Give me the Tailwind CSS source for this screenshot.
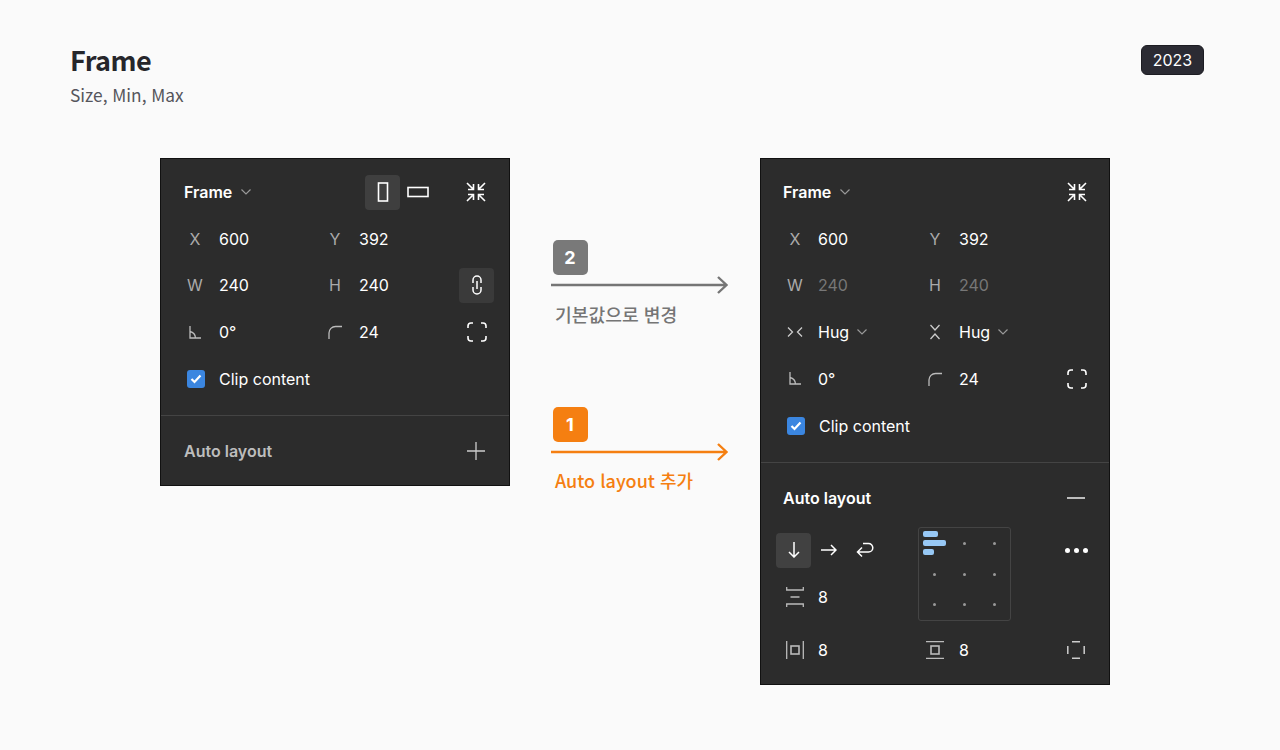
<!DOCTYPE html>
<html lang="ko">
<head>
  <meta charset="UTF-8">
  <meta name="viewport" content="width=device-width, initial-scale=1.0">
  <title>Frame - Size, Min, Max</title>
  <script src="https://cdn.jsdelivr.net/npm/@tailwindcss/browser@4"></script>
</head>
<body class="bg-[#fafafa] h-[750px] overflow-hidden font-['Inter','Noto_Sans_CJK_KR',sans-serif]">
  <!-- Header -->
  <header class="h-[158px] pl-[70px] pr-[76px] pt-[44px] flex justify-between items-start">
    <div class="font-['Noto_Sans_CJK_KR',sans-serif]">
      <h1 class="text-[27px] leading-[32px] font-bold tracking-[-0.5px] text-[#26262b]">Frame</h1>
      <p class="mt-[6px] text-[17.3px] leading-[26px] text-[#55555c]">Size, Min, Max</p>
    </div>
    <div class="mt-[1px] w-[63px] h-[30px] flex items-center justify-center rounded-md bg-[#2b2b33] border border-[#1c1c22] text-white text-[16px]">2023</div>
  </header>

  <main class="flex items-start pl-[160px]">
    <!-- Left panel -->
    <section class="w-[350px] h-[328px] bg-[#2c2c2c] border border-[#111] text-white text-[16px] shrink-0">
      <div class="pt-[10px] pb-[13px] border-b border-[#444]">
        <div class="h-[46.6px] flex items-center pl-[23px]">
          <span class="font-semibold w-[49px]">Frame</span>
          <svg class="w-[12px] h-[8px] ml-[7px] text-[#999]" viewBox="0 0 12 8" fill="none" stroke="currentColor" stroke-width="1.2"><path d="M1.5 1.5 6 6l4.500-4.500"/></svg>
          <div class="ml-[113px] w-[35px] h-[35px] rounded bg-[#3f3f3f] flex items-center justify-center">
            <svg class="w-[12px] h-[20px]" viewBox="0 0 12 20" fill="none" stroke="#fff" stroke-width="1.6"><rect x="1.500" y="1" width="9" height="18"/></svg>
          </div>
          <svg class="w-[22px] h-[12px] ml-[7px]" viewBox="0 0 22 12" fill="none" stroke="#fff" stroke-width="1.600"><rect x="1" y="1.500" width="20" height="9"/></svg>
          <svg class="w-[20px] h-[20px] ml-[37px]" viewBox="0 0 20 20" fill="none" stroke="#fff" stroke-width="1.600"><path d="M1 1l5.500 5.500M2 7.500h5.500V2M19 1l-5.500 5.500M18 7.500h-5.500V2M1 19l5.500-5.500M2 12.500h5.500V18M19 19l-5.500-5.500M18 12.500h-5.500V18"/></svg>
        </div>
        <div class="h-[46.6px] flex items-center pl-[22px]">
          <div class="w-[140px] flex items-center"><span class="w-[24px] text-center text-[#aaa]">X</span><span class="ml-[12px]">600</span></div>
          <div class="w-[140px] flex items-center"><span class="w-[24px] text-center text-[#aaa]">Y</span><span class="ml-[12px]">392</span></div>
        </div>
        <div class="h-[46.6px] flex items-center pl-[22px]">
          <div class="w-[140px] flex items-center"><span class="w-[24px] text-center text-[#aaa]">W</span><span class="ml-[12px]">240</span></div>
          <div class="w-[140px] flex items-center"><span class="w-[24px] text-center text-[#aaa]">H</span><span class="ml-[12px]">240</span></div>
          <div class="ml-[-4px] w-[35px] h-[35px] rounded bg-[#3a3a3a] flex items-center justify-center">
            <svg class="w-[10px] h-[20px]" viewBox="0 0 10 20" fill="none" stroke="#fff" stroke-width="1.500"><path d="M1 8V5a4 4 0 0 1 8 0v3M1 12v3a4 4 0 0 0 8 0v-3M5 6v8"/></svg>
          </div>
        </div>
        <div class="h-[46.6px] flex items-center pl-[22px]">
          <div class="w-[140px] flex items-center">
            <span class="w-[24px] flex justify-center"><svg class="w-[12px] h-[13px]" viewBox="0 0 12 13" fill="none" stroke="#bbb" stroke-width="1.300"><path d="M1 0v12h11M1 5.500a7 7 0 0 1 5.500 6.500"/></svg></span>
            <span class="ml-[12px]">0°</span>
          </div>
          <div class="w-[140px] flex items-center">
            <span class="w-[24px] flex justify-center"><svg class="w-[14px] h-[14px]" viewBox="0 0 14 14" fill="none" stroke="#bbb" stroke-width="1.300"><path d="M1 14V8a6.500 6.500 0 0 1 6.500-6.500H14"/></svg></span>
            <span class="ml-[12px]">24</span>
          </div>
          <svg class="w-[20px] h-[20px] ml-[4px]" viewBox="0 0 20 20" fill="none" stroke="#fff" stroke-width="1.600"><path d="M1 6V4a3 3 0 0 1 3-3h2M14 1h2a3 3 0 0 1 3 3v2M19 14v2a3 3 0 0 1-3 3h-2M6 19H4a3 3 0 0 1-3-3v-2"/></svg>
        </div>
        <div class="h-[46.6px] flex items-center pl-[26px]">
          <span class="w-[18px] h-[18px] rounded-[3px] bg-[#3b86e0] flex items-center justify-center">
            <svg class="w-[12px] h-[10px]" viewBox="0 0 12 10" fill="none" stroke="#fff" stroke-width="2.200"><path d="m1.500 5 3 3 6-6.500"/></svg>
          </span>
          <span class="ml-[14px]">Clip content</span>
        </div>
      </div>
      <div class="pt-[17px] h-[36px] box-content flex items-center pl-[23px] pr-[24px] justify-between">
        <span class="font-semibold text-[#bdbdbd]">Auto layout</span>
        <svg class="w-[18px] h-[18px]" viewBox="0 0 18 18" fill="none" stroke="#ccc" stroke-width="1.300"><path d="M9 0v18M0 9h18"/></svg>
      </div>
    </section>

    <!-- Middle arrows -->
    <div class="w-[250px] pl-[41px] pt-[82px] shrink-0">
      <div class="h-[167px]">
        <div class="w-[35px] h-[35px] ml-[1.500px] rounded-[5px] bg-[#797979] flex items-center justify-center text-white font-bold text-[18px]">2</div>
        <svg class="w-[178px] h-[20px] mt-0" viewBox="0 0 178 20" fill="none" stroke="#757575" stroke-width="2.400"><path d="M0 10h175M167 2l8.500 8-8.500 8"/></svg>
        <p class="mt-[7px] ml-[4px] text-[18.200px] leading-[24px] font-medium text-[#757575] font-['Noto_Sans_CJK_KR',sans-serif]">기본값으로 변경</p>
      </div>
      <div>
        <div class="w-[35px] h-[35px] ml-[1.500px] rounded-[5px] bg-[#f57f11] flex items-center justify-center text-white font-bold text-[18px]">1</div>
        <svg class="w-[178px] h-[20px]" viewBox="0 0 178 20" fill="none" stroke="#f57f11" stroke-width="2.400"><path d="M0 10h175M167 2l8.500 8-8.500 8"/></svg>
        <p class="mt-[6px] ml-[4px] text-[18px] leading-[24px] font-medium text-[#f57f11] font-['Noto_Sans_CJK_KR',sans-serif]">Auto layout 추가</p>
      </div>
    </div>

    <!-- Right panel -->
    <section class="w-[350px] h-[527px] bg-[#2c2c2c] border border-[#111] text-white text-[16px] shrink-0">
      <div class="pt-[10px] pb-[12px] border-b border-[#444]">
        <div class="h-[46.6px] flex items-center pl-[22px]">
          <span class="font-semibold w-[49px]">Frame</span>
          <svg class="w-[12px] h-[8px] ml-[7px] text-[#999]" viewBox="0 0 12 8" fill="none" stroke="currentColor" stroke-width="1.200"><path d="M1.500 1.500 6 6l4.500-4.500"/></svg>
          <svg class="w-[20px] h-[20px] ml-[216px]" viewBox="0 0 20 20" fill="none" stroke="#fff" stroke-width="1.600"><path d="M1 1l5.500 5.500M2 7.500h5.500V2M19 1l-5.500 5.500M18 7.500h-5.500V2M1 19l5.500-5.500M2 12.500h5.500V18M19 19l-5.500-5.500M18 12.500h-5.500V18"/></svg>
        </div>
        <div class="h-[46.6px] flex items-center pl-[22px]">
          <div class="w-[140px] flex items-center"><span class="w-[24px] text-center text-[#aaa]">X</span><span class="ml-[11px]">600</span></div>
          <div class="w-[140px] flex items-center"><span class="w-[24px] text-center text-[#aaa]">Y</span><span class="ml-[12px]">392</span></div>
        </div>
        <div class="h-[46.6px] flex items-center pl-[22px]">
          <div class="w-[140px] flex items-center"><span class="w-[24px] text-center text-[#aaa]">W</span><span class="ml-[11px] text-[#777]">240</span></div>
          <div class="w-[140px] flex items-center"><span class="w-[24px] text-center text-[#aaa]">H</span><span class="ml-[12px] text-[#777]">240</span></div>
        </div>
        <div class="h-[46.6px] flex items-center pl-[22px]">
          <div class="w-[140px] flex items-center">
            <span class="w-[24px] flex justify-center"><svg class="w-[16px] h-[12px]" viewBox="0 0 16 12" fill="none" stroke="#ccc" stroke-width="1.300"><path d="m1 1.500 4.500 4.500L1 10.500M15 1.500 10.500 6l4.500 4.500"/></svg></span>
            <span class="ml-[11px]">Hug</span>
            <svg class="w-[12px] h-[8px] ml-[7px] text-[#999]" viewBox="0 0 12 8" fill="none" stroke="currentColor" stroke-width="1.200"><path d="M1.500 1.500 6 6l4.500-4.500"/></svg>
          </div>
          <div class="w-[140px] flex items-center">
            <span class="w-[24px] flex justify-center"><svg class="w-[12px] h-[16px]" viewBox="0 0 12 16" fill="none" stroke="#ccc" stroke-width="1.300"><path d="M1.500 1 6 6l4.500-5M1.500 15 6 10l4.500 5"/></svg></span>
            <span class="ml-[12px]">Hug</span>
            <svg class="w-[12px] h-[8px] ml-[7px] text-[#999]" viewBox="0 0 12 8" fill="none" stroke="currentColor" stroke-width="1.200"><path d="M1.500 1.500 6 6l4.500-4.500"/></svg>
          </div>
        </div>
        <div class="h-[46.6px] flex items-center pl-[22px]">
          <div class="w-[140px] flex items-center">
            <span class="w-[24px] flex justify-center"><svg class="w-[12px] h-[13px]" viewBox="0 0 12 13" fill="none" stroke="#bbb" stroke-width="1.300"><path d="M1 0v12h11M1 5.500a7 7 0 0 1 5.500 6.500"/></svg></span>
            <span class="ml-[11px]">0°</span>
          </div>
          <div class="w-[140px] flex items-center">
            <span class="w-[24px] flex justify-center"><svg class="w-[14px] h-[14px]" viewBox="0 0 14 14" fill="none" stroke="#bbb" stroke-width="1.300"><path d="M1 14V8a6.500 6.500 0 0 1 6.500-6.500H14"/></svg></span>
            <span class="ml-[12px]">24</span>
          </div>
          <svg class="w-[20px] h-[20px] ml-[4px]" viewBox="0 0 20 20" fill="none" stroke="#fff" stroke-width="1.600"><path d="M1 6V4a3 3 0 0 1 3-3h2M14 1h2a3 3 0 0 1 3 3v2M19 14v2a3 3 0 0 1-3 3h-2M6 19H4a3 3 0 0 1-3-3v-2"/></svg>
        </div>
        <div class="h-[47.6px] flex items-center pl-[26px]">
          <span class="w-[18px] h-[18px] rounded-[3px] bg-[#3b86e0] flex items-center justify-center">
            <svg class="w-[12px] h-[10px]" viewBox="0 0 12 10" fill="none" stroke="#fff" stroke-width="2.200"><path d="m1.500 5 3 3 6-6.500"/></svg>
          </span>
          <span class="ml-[14px]">Clip content</span>
        </div>
      </div>

      <div class="pt-[17px] h-[36px] box-content flex items-center pl-[22px] pr-[24px] justify-between">
        <span class="font-semibold">Auto layout</span>
        <svg class="w-[18px] h-[2px]" viewBox="0 0 18 2" fill="none" stroke="#eee" stroke-width="1.500"><path d="M0 1h18"/></svg>
      </div>

      <div class="mt-[11px] flex items-start">
        <div class="w-[157px]">
          <div class="h-[47px] flex items-center pl-[15px]">
            <div class="w-[35px] h-[35px] rounded bg-[#414141] flex items-center justify-center">
              <svg class="w-[12px] h-[16px]" viewBox="0 0 12 16" fill="none" stroke="#fff" stroke-width="1.500"><path d="M6 0v15M1 10l5 5 5-5"/></svg>
            </div>
            <svg class="w-[16px] h-[12px] ml-[10px]" viewBox="0 0 16 12" fill="none" stroke="#fff" stroke-width="1.500"><path d="M0 6h15M10 1l5 5-5 5"/></svg>
            <svg class="w-[18px] h-[16px] ml-[19px]" viewBox="0 0 18 16" fill="none" stroke="#fff" stroke-width="1.500"><path d="M7 1.500h5.500a4.300 4.300 0 0 1 0 8.600H2M6 5.500 1.500 10 6 14.500"/></svg>
          </div>
          <div class="h-[47px] flex items-center pl-[22px]">
            <span class="w-[24px] flex justify-center"><svg class="w-[18px] h-[20px]" viewBox="0 0 18 20" fill="none" stroke="#bbb" stroke-width="1.300"><path d="M.7 0v3h16.600V0M.7 20v-3h16.600v3M4.500 10h9"/></svg></span>
            <span class="ml-[11px]">8</span>
          </div>
        </div>
        <!-- alignment grid -->
        <div class="w-[93px] h-[94px] rounded-[3px] border-[1.5px] border-[#444] relative grid grid-cols-3 grid-rows-3 place-items-center pt-[1px]">
          <div class="absolute left-[3.500px] top-[3.500px] flex flex-col gap-[3px]">
            <span class="block w-[15px] h-[6px] rounded-[2px] bg-[#97c8f5]"></span>
            <span class="block w-[23px] h-[6px] rounded-[2px] bg-[#97c8f5]"></span>
            <span class="block w-[11px] h-[6px] rounded-[2px] bg-[#97c8f5]"></span>
          </div>
          <span></span>
          <span class="w-[3px] h-[3px] rounded-full bg-[#999]"></span>
          <span class="w-[3px] h-[3px] rounded-full bg-[#999]"></span>
          <span class="w-[3px] h-[3px] rounded-full bg-[#999]"></span>
          <span class="w-[3px] h-[3px] rounded-full bg-[#999]"></span>
          <span class="w-[3px] h-[3px] rounded-full bg-[#999]"></span>
          <span class="w-[3px] h-[3px] rounded-full bg-[#999]"></span>
          <span class="w-[3px] h-[3px] rounded-full bg-[#999]"></span>
          <span class="w-[3px] h-[3px] rounded-full bg-[#999]"></span>
        </div>
        <div class="h-[47px] flex items-center gap-[4px] ml-[54px]">
          <span class="w-[5px] h-[5px] rounded-full bg-white"></span>
          <span class="w-[5px] h-[5px] rounded-full bg-white"></span>
          <span class="w-[5px] h-[5px] rounded-full bg-white"></span>
        </div>
      </div>

      <div class="h-[58px] flex items-center pl-[22px]">
        <div class="w-[140px] flex items-center">
          <span class="w-[24px] flex justify-center"><svg class="w-[18px] h-[18px]" viewBox="0 0 18 18" fill="none" stroke="#bbb" stroke-width="1.300"><path d="M.7 0v18M17.300 0v18"/><rect x="5" y="5" width="8" height="8" stroke-width="1.600"/></svg></span>
          <span class="ml-[11px]">8</span>
        </div>
        <div class="w-[140px] flex items-center">
          <span class="w-[24px] flex justify-center"><svg class="w-[18px] h-[18px]" viewBox="0 0 18 18" fill="none" stroke="#bbb" stroke-width="1.300"><path d="M0 .7h18M0 17.300h18"/><rect x="5" y="5" width="8" height="8" stroke-width="1.600"/></svg></span>
          <span class="ml-[12px]">8</span>
        </div>
        <svg class="w-[18px] h-[18px] ml-[4px]" viewBox="0 0 18 18" fill="none" stroke="#ccc" stroke-width="1.500"><path d="M5 .8h8M5 17.200h8M.8 5v8M17.200 5v8"/></svg>
      </div>
    </section>
  </main>
</body>
</html>
